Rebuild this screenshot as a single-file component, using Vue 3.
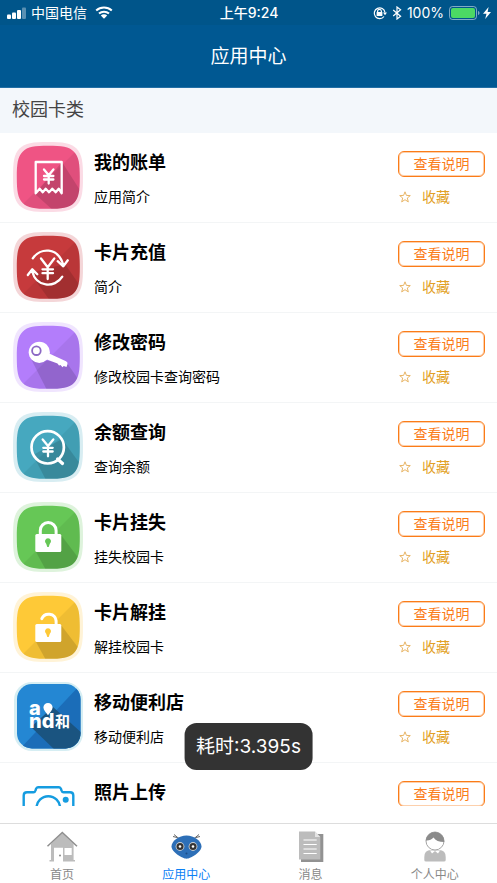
<template>
  <div class="page">
    <div class="status-bar">
      <div class="status-left">
        <svg class="signal" viewBox="0 0 20 14" aria-hidden="true">
          <rect x="0" y="8.500" width="4" height="4.500" rx="1" />
          <rect x="5" y="6.500" width="4" height="6.500" rx="1" />
          <rect x="10" y="4" width="4" height="9" rx="1" />
          <rect x="15" y="1.500" width="4" height="11.500" rx="1" opacity="0.35" />
        </svg>
        <span>中国电信</span>
        <svg class="wifi" viewBox="0 0 18 13" aria-hidden="true">
          <path d="M1.200 4.600C5.600.6 12.400.6 16.800 4.600M4 7.600C6.800 5 11.200 5 14 7.600" />
          <path class="fill" d="M5.800 9.500C7.600 7.900 10.400 7.900 12.200 9.500L9 12.700Z" />
        </svg>
      </div>
      <span class="time">上午9:24</span>
      <div class="status-right">
        <svg class="lock" viewBox="0 0 14 14" aria-hidden="true">
          <path d="M11 10.500A5.400 5.400 0 1 1 12 6.500" />
          <path d="M4.600 6.500V5.200a1.900 1.900 0 0 1 3.800 0v1.300" />
          <rect class="fill" x="3.600" y="6" width="5.800" height="4" rx="0.6" />
          <path class="fill" d="M10 6.500H14L12 9.300Z" />
        </svg>
        <svg class="bluetooth" viewBox="0 0 10 14" aria-hidden="true">
          <path d="M1.200 4L8.600 10.200L5 13V1L8.600 3.800L1.200 10" />
        </svg>
        <span>100%</span>
        <svg class="battery" viewBox="0 0 32 14" aria-hidden="true">
          <rect x="0.5" y="0.5" width="27" height="13" rx="3" fill="none" stroke="#fff" stroke-opacity="0.5" />
          <rect x="2" y="2" width="24" height="10" rx="2" fill="#4cd964" />
          <path d="M29 5c2 .5 2 3.500 0 4z" fill="#fff" opacity="0.5" />
        </svg>
        <svg class="bolt" viewBox="0 0 8 12" aria-hidden="true">
          <path d="M5.600 0L0 6.800H3.500L2.200 12L8 4.900H4.600Z" fill="#fff" />
        </svg>
      </div>
    </div>

    <header class="header">
      <h1>应用中心</h1>
    </header>

    <h2 class="section-title">校园卡类</h2>

    <ul class="app-list">
      <li v-for="app in apps" :key="app.id" class="app-item">
        <svg class="app-icon" viewBox="0 0 70 70" aria-hidden="true">
          <template v-if="app.color">
            <clipPath :id="'clip-' + app.id">
              <path :d="squircle" transform="translate(3.800 3.800) scale(0.9)" />
            </clipPath>
            <path :d="squircle" :fill="app.halo" />
            <g :clip-path="`url(#clip-${app.id})`">
              <rect width="70" height="70" :fill="app.color" />
              <path d="M70 2V70H2Z" fill="#000" opacity="0.06" />
              <path :d="app.shadow" fill="#000" opacity="0.13" />
            </g>
          </template>

          <g v-if="app.id === 'bill'" class="line">
            <path d="M22.700 51.300V20H48.700V51.300L45.700 46.700L42.700 50.300L39.300 46.700L36 50.300L32.700 46.700L29.700 50.300L26.700 46.700Z" />
            <path d="M31 27.500L35.700 33.300L40.400 27.500M35.700 33.300V41.500M31 34H40.400M31 37.500H40.400" />
          </g>
          <g v-else-if="app.id === 'recharge'" class="line">
            <path d="M19.800 26.300C27 15.500 45 14.500 50.300 33M44.700 29.200L50.300 34.300L54.800 28.300" />
            <path d="M49.300 44.700C42 56.500 22.500 55.500 19.300 39M14.800 43L19.300 37.300L24.300 42.300" />
            <path d="M28 26.500L34.700 35.300L41.300 26.500M34.700 35.300V47M29.500 37.300H40M29.500 41.200H40" />
          </g>
          <g v-else-if="app.id === 'password'">
            <path d="M34 30.500L53 39.200Q55 40.200 54.500 42L53.500 45L50.700 44L49.500 45.200L47.500 43L46 43.500L44.500 41.500L32.500 37Z" fill="#fff" />
            <circle cx="26.300" cy="30.300" r="10.600" fill="#fff" />
            <circle cx="23.400" cy="28.700" r="4.300" fill="none" stroke="#8c68c4" stroke-width="1.800" />
          </g>
          <g v-else-if="app.id === 'balance'" class="line">
            <circle cx="34.700" cy="35.300" r="16.200" stroke-width="2.700" />
            <path d="M44.500 47L49.500 51.500" stroke-width="3.200" />
            <path d="M29.700 27.500L35 34L40.300 27.500M35 34V44.300M30.300 35.800H39.700M30.300 39.500H39.700" />
          </g>
          <g v-else-if="app.id === 'lock' || app.id === 'unlock'">
            <path v-if="app.id === 'lock'" class="shackle" d="M27.300 33V28.500a7.900 7.900 0 0 1 15.800 0V33" />
            <path v-else class="shackle" d="M28.800 26.700a7.500 7.500 0 0 1 14.300 2V33" />
            <rect x="22.300" y="32" width="26" height="18" rx="1.500" fill="#fff" />
            <path d="M35 36.300a3 3 0 0 1 1.800 5.400L35.700 45H34.300L33.200 41.700A3 3 0 0 1 35 36.300Z" :fill="app.color" />
          </g>
          <g v-else-if="app.id === 'store'">
            <clipPath id="clip-store">
              <rect x="4" y="2" width="63.500" height="64.500" rx="15" />
            </clipPath>
            <rect x="1" y="0" width="69" height="69" rx="18" fill="#d6eef3" />
            <g clip-path="url(#clip-store)">
              <rect width="70" height="70" fill="#2487d3" />
              <path d="M70 0V70H4Z" fill="#1b6db8" />
              <path d="M40 25L70 52V70H44L18 45Z" fill="#1a5480" />
            </g>
            <text class="logo-and" x="16" y="33">a</text>
            <text class="logo-and" x="16" y="46">nd</text>
            <text class="logo-he" x="42" y="45">和</text>
            <path d="M35 21a4.600 4.600 0 0 1 4.600 4.600C39.600 28.500 36.500 31 35 33.300C33.500 31 30.400 28.500 30.400 25.600A4.600 4.600 0 0 1 35 21Z" fill="#fff" />
          </g>
          <g v-else-if="app.id === 'photo'" class="camera">
            <path d="M10.700 56V23.500Q10.700 20.300 14 20.300H20.500Q22 20.300 22.500 18.500L23 17Q23.500 15.300 25 15.300H46Q47.500 15.300 48 17L48.500 18.500Q49 20.300 50.500 20.300H57Q60.300 20.300 60.300 23.500V56Z" />
            <circle cx="35.300" cy="36" r="11.800" />
            <circle cx="52.700" cy="27.700" r="3" class="dot" />
          </g>
        </svg>

        <div class="app-info">
          <h3>{{ app.title }}</h3>
          <p>{{ app.desc }}</p>
        </div>

        <div class="app-actions">
          <button class="help-btn" type="button">查看说明</button>
          <button class="fav-btn" type="button">
            <svg viewBox="0 0 12 12" aria-hidden="true">
              <path d="M6 .8L7.400 4.400L11.300 4.600L8.300 7L9.300 10.900L6 8.700L2.700 10.900L3.700 7L.7 4.600L4.600 4.400Z" />
            </svg>
            收藏
          </button>
        </div>
      </li>
    </ul>

    <nav class="tab-bar">
      <a v-for="tab in tabs" :key="tab.id" href="#" :class="{ active: tab.id === 'apps' }">
        <svg viewBox="0 0 32 32" aria-hidden="true">
          <g v-if="tab.id === 'home'">
            <path d="M5 13L16.300 2L27.600 13V29H29V30.500H17V16.700H8V30.500H3.500V29H5Z" fill="#bcbcbc" />
            <path d="M18.500 17H25.700V24H18.500Z" fill="#fff" />
            <path d="M1.500 15.300L16.300 1.500L31 15.300" fill="none" stroke="#8e8e8e" stroke-width="1.500" />
            <circle cx="14" cy="24.500" r="1" fill="#888" />
          </g>
          <g v-else-if="tab.id === 'apps'">
            <path d="M4 3.500L9.500 8M3 5.500L7 6.500M29 3.500L23.500 8M30 5.500L26 6.500" stroke="#666" stroke-width="1" />
            <path d="M16.500 4.500C24 4.500 31.500 10 31.500 15.500C31.500 21 20.500 27.700 16.500 27.700S1.500 21 1.500 15.500C1.500 10 9 4.500 16.500 4.500Z" fill="#2d6fb7" />
            <g v-for="x in [10, 23]" :key="x">
              <circle :cx="x" cy="15.500" r="4.400" fill="#c9cdd0" />
              <circle :cx="x" cy="15.500" r="3.500" fill="#343434" />
              <circle :cx="x" cy="15.500" r="1.300" fill="#fff" />
            </g>
            <circle cx="16.500" cy="22.500" r="1" fill="#1d4c86" />
          </g>
          <g v-else-if="tab.id === 'news'">
            <path d="M7 3H28.300V31H6V28Z" fill="#929292" />
            <path d="M4 .5H20L25.300 6V28.500H4Z" fill="#bcbcbc" />
            <path d="M20 .5V6H25.300Z" fill="#e4e4e4" />
            <path d="M8.500 9H21.700M8.500 13.500H21.700M8.500 18H21.700M8.500 22.500H21.700" stroke="#fff" stroke-width="1.200" />
          </g>
          <g v-else>
            <path d="M5.300 29V26Q5.300 19 12 19H20Q26.700 19 26.700 26V29Q26.700 30.500 25 30.500H7Q5.300 30.500 5.300 29Z" fill="#bcbcbc" />
            <path d="M11 19.500L13 22.500L16 20L19 22.500L21 19.500Z" fill="#fff" />
            <circle cx="16" cy="10" r="9" fill="#fff" stroke="#a5a5a5" stroke-width="1" />
            <path d="M6.700 9.500A9.300 9.300 0 0 1 25.300 11C20 11 16.500 9.500 14.500 6.500C12.500 8.800 10 9.800 6.700 9.500Z" fill="#8b8b8b" />
          </g>
        </svg>
        <span>{{ tab.label }}</span>
      </a>
    </nav>

    <div class="toast" role="status">耗时:3.395s</div>
  </div>
</template>

<script setup>
// contorno redondeado común a los iconos
const squircle =
  'M35 0C50 0 58 1 63.500 6.500C69 12 70 20 70 35C70 50 69 58 63.500 63.500C58 69 50 70 35 70C20 70 12 69 6.500 63.500C1 58 0 50 0 35C0 20 1 12 6.500 6.500C12 1 20 0 35 0Z'

const apps = [
  { id: 'bill', title: '我的账单', desc: '应用简介', color: '#ef5484', halo: '#fbdbe5', shadow: 'M49 20L70 53V70H42L22 52Z' },
  { id: 'recharge', title: '卡片充值', desc: '简介', color: '#c63a3c', halo: '#f4d6d8', shadow: 'M52 32L70 58V70H38L17 41Z' },
  { id: 'password', title: '修改密码', desc: '修改校园卡查询密码', color: '#b37dfb', halo: '#f0e5fe', shadow: 'M54 41L70 64V72H36L18 37Z' },
  { id: 'balance', title: '余额查询', desc: '查询余额', color: '#46a8bf', halo: '#d8edf2', shadow: 'M49 27L70 56V70H34L20 43Z' },
  { id: 'lock', title: '卡片挂失', desc: '挂失校园卡', color: '#66c756', halo: '#def3dc', shadow: 'M48 33L70 62V70H34L23 50Z' },
  { id: 'unlock', title: '卡片解挂', desc: '解挂校园卡', color: '#fec937', halo: '#fff3d7', shadow: 'M48 33L70 62V70H34L23 50Z' },
  { id: 'store', title: '移动便利店', desc: '移动便利店' },
  { id: 'photo', title: '照片上传', desc: '照片上传' }
]

const tabs = [
  { id: 'home', label: '首页' },
  { id: 'apps', label: '应用中心' },
  { id: 'news', label: '消息' },
  { id: 'me', label: '个人中心' }
]
</script>

<style>
body {
  margin: 0;
}
</style>

<style scoped>
.page {
  display: flex;
  flex-direction: column;
  height: 100vh;
  overflow: hidden;
  background: #fff;
  color: #000;
  font-family: Inter, "Noto Sans CJK SC", sans-serif;
}
h1, h2, h3, p, ul {
  margin: 0;
  padding: 0;
  font-weight: normal;
}
button {
  font-family: inherit;
  padding: 0;
  background: none;
  cursor: pointer;
}
.status-bar {
  display: grid;
  grid-template-columns: 1fr auto 1fr;
  align-items: center;
  height: 25px;
  flex: none;
  padding: 0 6px 0 7px;
  background: #00558a;
  color: #fff;
  font-size: 14px;
  line-height: 24px;
}
.status-left,
.status-right {
  display: flex;
  align-items: center;
}
.status-right {
  justify-content: flex-end;
  gap: 5px;
}
.signal {
  width: 20px;
  height: 14px;
  margin-right: 4px;
  fill: #fff;
}
.wifi {
  width: 18px;
  height: 13px;
  margin-left: 8px;
  fill: none;
  stroke: #fff;
  stroke-width: 2;
}
.time {
  font-weight: 500;
}
.lock {
  width: 14px;
  height: 14px;
}
.bluetooth {
  width: 10px;
  height: 14px;
}
.lock,
.bluetooth {
  fill: none;
  stroke: #fff;
  stroke-width: 1.2;
}
.status-bar .fill {
  fill: #fff;
  stroke: none;
}
.battery {
  width: 32px;
  height: 14px;
}
.bolt {
  width: 8px;
  height: 12px;
  margin-left: -3px;
}
.header {
  flex: none;
  height: 62px;
  border-bottom: 1px solid #236fa5;
  background: #005892;
  color: #fff;
  text-align: center;
}
.header h1 {
  font-size: 19px;
  line-height: 64px;
}
.section-title {
  flex: none;
  padding: 0 12px 2px;
  background: #f3f7fb;
  color: #444;
  font-size: 18px;
  line-height: 43px;
}
.app-list {
  flex: 1;
  min-height: 0;
  margin-bottom: 17px;
  overflow: hidden;
  list-style: none;
}
.app-item {
  display: flex;
  align-items: flex-start;
  height: 80px;
  padding: 9px 12px 0 13px;
  border-bottom: 1px solid #f3f5f6;
}
.app-icon {
  width: 70px;
  height: 70px;
  flex: none;
}
.line {
  fill: none;
  stroke: #fff;
  stroke-width: 2.3;
  stroke-linecap: round;
  stroke-linejoin: round;
}
.shackle {
  fill: none;
  stroke: #fff;
  stroke-width: 3;
  stroke-linecap: round;
}
.logo-and {
  fill: #fff;
  font-size: 20px;
  font-weight: 800;
}
.logo-he {
  fill: #fff;
  font-size: 15px;
  font-weight: bold;
}
.camera {
  fill: none;
  stroke: #159ce0;
  stroke-width: 2.4;
}
.camera .dot {
  fill: #159ce0;
  stroke: none;
}
.app-info {
  flex: 1;
  padding: 8px 0 0 11px;
}
.app-info h3 {
  font-size: 18px;
  font-weight: bold;
  line-height: 26px;
}
.app-info p {
  margin-top: 11px;
  font-size: 14px;
  line-height: 20px;
}
.app-actions {
  display: flex;
  flex-direction: column;
  gap: 10px;
  width: 87px;
  padding-top: 9px;
}
.help-btn {
  height: 26px;
  border: 1px solid #fb7c18;
  border-radius: 6px;
  box-shadow: inset 0 0 0 1px #fdd0ac;
  color: #fb7c18;
  font-size: 14px;
  line-height: 24px;
}
.fav-btn {
  display: flex;
  align-items: center;
  gap: 11px;
  height: 20px;
  border: none;
  color: #e2a126;
  font-size: 14px;
  line-height: 20px;
}
.fav-btn svg {
  width: 12px;
  height: 12px;
  margin-left: 1px;
  fill: none;
  stroke: #e8b566;
  stroke-width: 1;
}
.tab-bar {
  display: flex;
  flex: none;
  height: 59px;
  border-top: 1px solid #ddd;
}
.tab-bar a {
  display: flex;
  flex: 1;
  flex-direction: column;
  align-items: center;
  padding-top: 7px;
  color: #888;
  font-size: 12px;
  line-height: 16px;
  text-decoration: none;
}
.tab-bar a.active {
  color: #0b80f5;
}
.tab-bar svg {
  width: 32px;
  height: 32px;
  margin-bottom: 4px;
}
.toast {
  position: fixed;
  bottom: 113px;
  left: 50%;
  padding: 0 12px;
  border-radius: 12px;
  background: #333;
  color: #fff;
  font-size: 19px;
  line-height: 47px;
  white-space: nowrap;
  transform: translateX(-50%);
}
</style>
